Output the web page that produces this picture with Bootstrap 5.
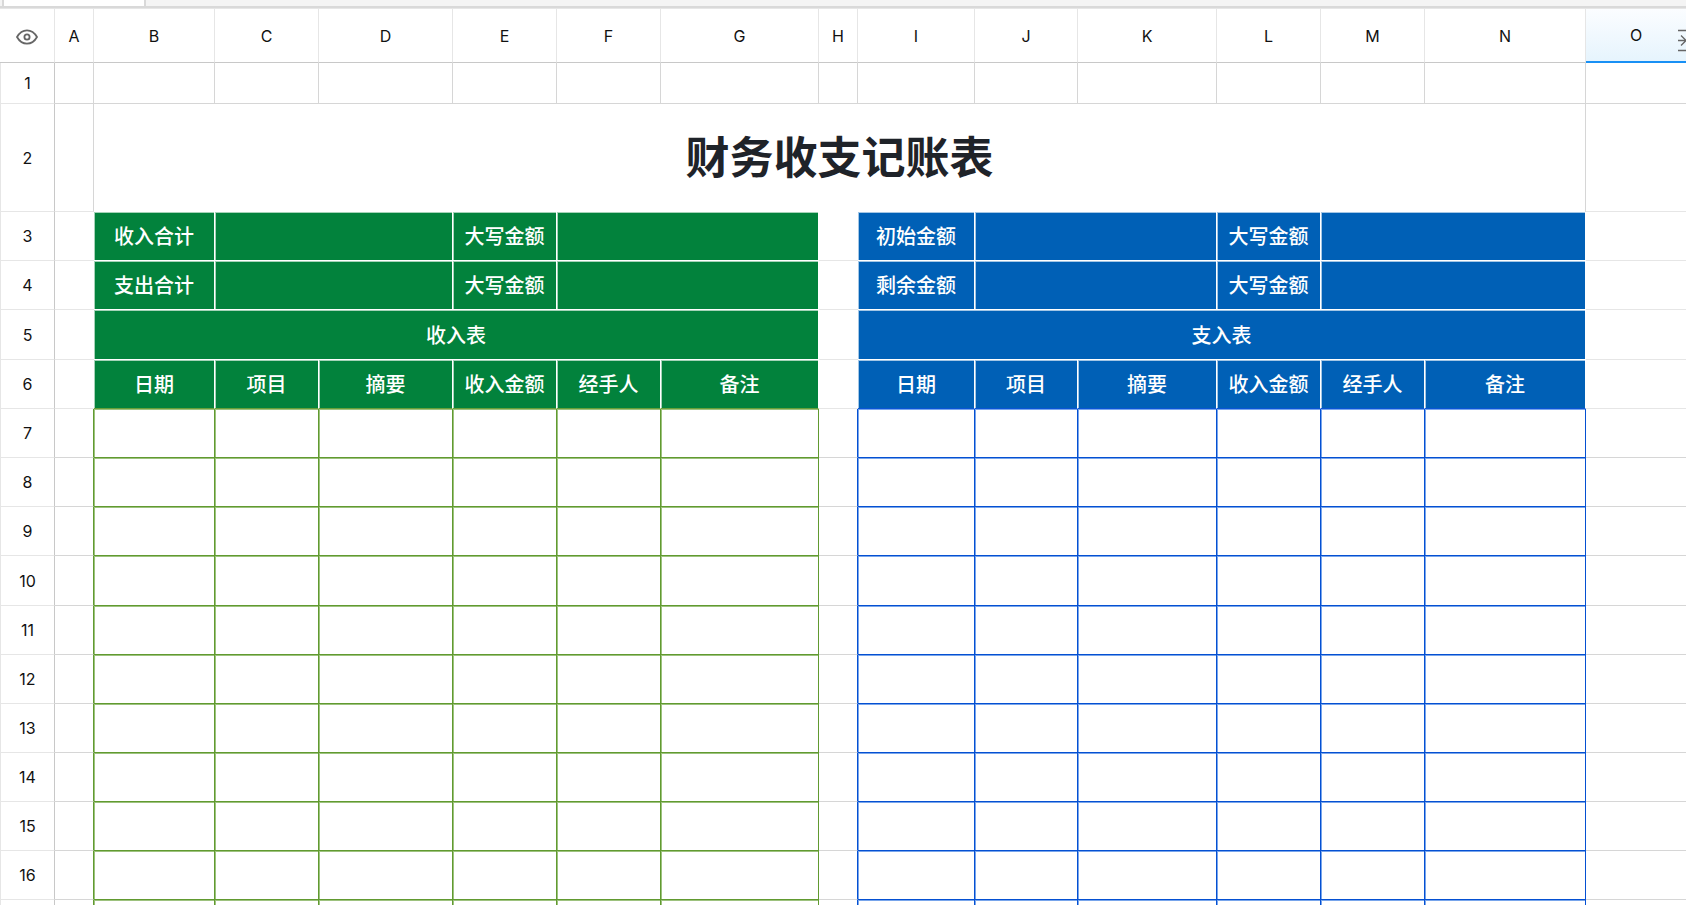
<!DOCTYPE html>
<html lang="zh-CN">
<head>
<meta charset="utf-8">
<meta name="viewport" content="width=device-width, initial-scale=1">
<title>财务收支记账表</title>
<link href="https://cdn.jsdelivr.net/npm/bootstrap@5.3.0/dist/css/bootstrap.min.css" rel="stylesheet">
<style>
  :root { --line: #d6d6d6; --line-soft: #e6e6e6; }
  body { font-family: Inter, "Noto Sans CJK SC", sans-serif; color: #111; background: #fff; }
  .formula-bar { height: 8px; padding-left: 2px; background: #f4f4f4; border-bottom: 2px solid #d9d9d9; }
  .name-box { width: 144px; background: #fff; border-left: 2px solid #d9d9d9; border-right: 2px solid #d9d9d9; }

  .sheet { table-layout: fixed; width: 100%; border-collapse: separate; border-spacing: 0; }
  .sheet th, .sheet td { padding: 0; text-align: center; vertical-align: middle; border: 0 solid var(--line); white-space: nowrap; }
  .w-head { width: 55px; } .w-a { width: 39px; } .w-b { width: 121px; } .w-s { width: 104px; }
  .w-d { width: 134px; } .w-g { width: 158px; } .w-h { width: 39px; } .w-i { width: 117px; }
  .w-j { width: 103px; } .w-k { width: 139px; } .w-n { width: 161px; }

  .sheet thead th { height: 55px; font-size: 16px; line-height: 24px; font-weight: 400;
    border-top: 1px solid var(--line-soft); border-right: 1px solid var(--line-soft); border-bottom: 1px solid #c8c8c8; }
  .sheet thead th.selected { position: relative; overflow: hidden; border-right: 0; border-bottom: 2px solid #1890f5;
    background: linear-gradient(#fbfdff, #e6f4fd); }
  .insert-mark { position: absolute; top: 19px; right: -10px; }
  .sheet tbody th { font-size: 16px; line-height: 24px; font-weight: 400; border-left: 1px solid var(--line-soft);
    border-right: 1px solid #c8c8c8; border-bottom: 1px solid var(--line-soft); }

  .sheet tbody tr { height: 49px; }
  .sheet tbody tr.r-first { height: 41px; }
  .sheet tbody tr.r-title { height: 108px; }
  .sheet tbody tr.r-tall { height: 50px; }
  .r-first td { border-right-width: 1px !important; border-bottom-width: 1px !important; }
  .r-first td:last-child, .r-title td:last-child { border-right-width: 0 !important; }
  .r-title td { border-right-width: 1px !important; }
  .sheet .gap { border-bottom: 1px solid var(--line-soft); }
  .sheet .title-cell { font-size: 44px; line-height: 64px; font-weight: 700; color: #1f2329; }

  .inc, .exp { color: #fff; font-size: 20px; line-height: 28px; font-weight: 500; }
  .sheet .inc, .sheet .exp { padding-top: 2px; border-right: 1px solid #fff; border-bottom: 1px solid #fff; }
  .inc { background: #02823c; box-shadow: inset 1px 1px #a5d3b8; }
  .exp { background: #0060b6; box-shadow: inset 1px 1px #a3c6e5; }
  .sheet .r-names .inc { border-bottom-color: #689f38; }
  .sheet .r-names .exp { border-bottom-color: #0a55d5; }

  .r-data td { border-right-width: 1px !important; border-bottom-width: 1px !important; }
  .sheet .gi { border-color: #619a30; box-shadow: inset 1px 1px #9dc27e; }
  .sheet .ge { border-color: #0550d2; box-shadow: inset 1px 1px #78a5eb; }
  .sheet .r-data .before-gi { border-right-color: #619a30; }
  .sheet .r-data .before-ge { border-right-color: #0550d2; }
  .sheet .r-data td:last-child { border-right-width: 0 !important; }
</style>
</head>
<body class="overflow-hidden">
<div class="formula-bar d-flex"><div class="name-box"></div></div>
<main>
<table class="sheet">
  <colgroup>
    <col class="w-head"><col class="w-a"><col class="w-b"><col class="w-s"><col class="w-d"><col class="w-s"><col class="w-s"><col class="w-g">
    <col class="w-h"><col class="w-i"><col class="w-j"><col class="w-k"><col class="w-s"><col class="w-s"><col class="w-n"><col>
  </colgroup>
  <thead>
    <tr>
      <th scope="col"><svg width="22" height="16" viewBox="0 0 22 16" fill="none" stroke="#666" stroke-width="1.8" role="img" aria-label="显示"><path d="M1 8C3.5 3.6 7 1.3 11 1.3S18.5 3.6 21 8C18.5 12.4 15 14.7 11 14.7S3.5 12.4 1 8Z"/><circle cx="11" cy="8" r="2.6"/></svg></th>
      <th scope="col">A</th><th scope="col">B</th><th scope="col">C</th><th scope="col">D</th><th scope="col">E</th><th scope="col">F</th><th scope="col">G</th>
      <th scope="col">H</th><th scope="col">I</th><th scope="col">J</th><th scope="col">K</th><th scope="col">L</th><th scope="col">M</th><th scope="col">N</th>
      <th scope="col" class="selected">O<svg class="insert-mark" width="18" height="24" viewBox="0 0 18 24" fill="none" stroke="#666" stroke-width="1.3"><path d="M0 2.5H18M0 12.5H8M0 22.5H18M3 7.5L8 12.5L3 17.5"/></svg></th>
    </tr>
  </thead>
  <tbody>
    <tr class="r-first"><th scope="row">1</th><td></td><td></td><td></td><td></td><td></td><td></td><td></td><td></td><td></td><td></td><td></td><td></td><td></td><td></td><td></td></tr>
    <tr class="r-title"><th scope="row">2</th><td class="gap"></td><td class="title-cell" colspan="13">财务收支记账表</td><td class="gap"></td></tr>
    <tr><th scope="row">3</th><td class="gap"></td><td class="inc">收入合计</td><td class="inc" colspan="2"></td><td class="inc">大写金额</td><td class="inc" colspan="2"></td><td class="gap"></td><td class="exp">初始金额</td><td class="exp" colspan="2"></td><td class="exp">大写金额</td><td class="exp" colspan="2"></td><td class="gap"></td></tr>
    <tr><th scope="row">4</th><td class="gap"></td><td class="inc">支出合计</td><td class="inc" colspan="2"></td><td class="inc">大写金额</td><td class="inc" colspan="2"></td><td class="gap"></td><td class="exp">剩余金额</td><td class="exp" colspan="2"></td><td class="exp">大写金额</td><td class="exp" colspan="2"></td><td class="gap"></td></tr>
    <tr class="r-tall"><th scope="row">5</th><td class="gap"></td><td class="inc" colspan="6">收入表</td><td class="gap"></td><td class="exp" colspan="6">支入表</td><td class="gap"></td></tr>
    <tr class="r-names"><th scope="row">6</th><td class="gap"></td><td class="inc">日期</td><td class="inc">项目</td><td class="inc">摘要</td><td class="inc">收入金额</td><td class="inc">经手人</td><td class="inc">备注</td><td class="gap"></td><td class="exp">日期</td><td class="exp">项目</td><td class="exp">摘要</td><td class="exp">收入金额</td><td class="exp">经手人</td><td class="exp">备注</td><td class="gap"></td></tr>
    <tr class="r-data"><th scope="row">7</th><td class="before-gi"></td><td class="gi"></td><td class="gi"></td><td class="gi"></td><td class="gi"></td><td class="gi"></td><td class="gi"></td><td class="before-ge"></td><td class="ge"></td><td class="ge"></td><td class="ge"></td><td class="ge"></td><td class="ge"></td><td class="ge"></td><td></td></tr>
    <tr class="r-data"><th scope="row">8</th><td class="before-gi"></td><td class="gi"></td><td class="gi"></td><td class="gi"></td><td class="gi"></td><td class="gi"></td><td class="gi"></td><td class="before-ge"></td><td class="ge"></td><td class="ge"></td><td class="ge"></td><td class="ge"></td><td class="ge"></td><td class="ge"></td><td></td></tr>
    <tr class="r-data"><th scope="row">9</th><td class="before-gi"></td><td class="gi"></td><td class="gi"></td><td class="gi"></td><td class="gi"></td><td class="gi"></td><td class="gi"></td><td class="before-ge"></td><td class="ge"></td><td class="ge"></td><td class="ge"></td><td class="ge"></td><td class="ge"></td><td class="ge"></td><td></td></tr>
    <tr class="r-data r-tall"><th scope="row">10</th><td class="before-gi"></td><td class="gi"></td><td class="gi"></td><td class="gi"></td><td class="gi"></td><td class="gi"></td><td class="gi"></td><td class="before-ge"></td><td class="ge"></td><td class="ge"></td><td class="ge"></td><td class="ge"></td><td class="ge"></td><td class="ge"></td><td></td></tr>
    <tr class="r-data"><th scope="row">11</th><td class="before-gi"></td><td class="gi"></td><td class="gi"></td><td class="gi"></td><td class="gi"></td><td class="gi"></td><td class="gi"></td><td class="before-ge"></td><td class="ge"></td><td class="ge"></td><td class="ge"></td><td class="ge"></td><td class="ge"></td><td class="ge"></td><td></td></tr>
    <tr class="r-data"><th scope="row">12</th><td class="before-gi"></td><td class="gi"></td><td class="gi"></td><td class="gi"></td><td class="gi"></td><td class="gi"></td><td class="gi"></td><td class="before-ge"></td><td class="ge"></td><td class="ge"></td><td class="ge"></td><td class="ge"></td><td class="ge"></td><td class="ge"></td><td></td></tr>
    <tr class="r-data"><th scope="row">13</th><td class="before-gi"></td><td class="gi"></td><td class="gi"></td><td class="gi"></td><td class="gi"></td><td class="gi"></td><td class="gi"></td><td class="before-ge"></td><td class="ge"></td><td class="ge"></td><td class="ge"></td><td class="ge"></td><td class="ge"></td><td class="ge"></td><td></td></tr>
    <tr class="r-data"><th scope="row">14</th><td class="before-gi"></td><td class="gi"></td><td class="gi"></td><td class="gi"></td><td class="gi"></td><td class="gi"></td><td class="gi"></td><td class="before-ge"></td><td class="ge"></td><td class="ge"></td><td class="ge"></td><td class="ge"></td><td class="ge"></td><td class="ge"></td><td></td></tr>
    <tr class="r-data"><th scope="row">15</th><td class="before-gi"></td><td class="gi"></td><td class="gi"></td><td class="gi"></td><td class="gi"></td><td class="gi"></td><td class="gi"></td><td class="before-ge"></td><td class="ge"></td><td class="ge"></td><td class="ge"></td><td class="ge"></td><td class="ge"></td><td class="ge"></td><td></td></tr>
    <tr class="r-data"><th scope="row">16</th><td class="before-gi"></td><td class="gi"></td><td class="gi"></td><td class="gi"></td><td class="gi"></td><td class="gi"></td><td class="gi"></td><td class="before-ge"></td><td class="ge"></td><td class="ge"></td><td class="ge"></td><td class="ge"></td><td class="ge"></td><td class="ge"></td><td></td></tr>
    <tr class="r-data"><th scope="row"></th><td class="before-gi"></td><td class="gi"></td><td class="gi"></td><td class="gi"></td><td class="gi"></td><td class="gi"></td><td class="gi"></td><td class="before-ge"></td><td class="ge"></td><td class="ge"></td><td class="ge"></td><td class="ge"></td><td class="ge"></td><td class="ge"></td><td></td></tr>
  </tbody>
</table>
</main>
<script src="https://cdn.jsdelivr.net/npm/bootstrap@5.3.0/dist/js/bootstrap.bundle.min.js"></script>
</body>
</html>
